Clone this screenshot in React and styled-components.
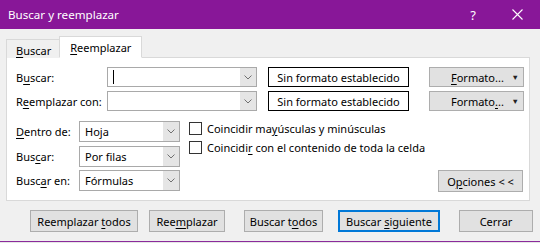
import React from "react";
import styled, { createGlobalStyle } from "styled-components";

const GlobalStyle = createGlobalStyle`
  html, body { margin: 0; padding: 0; }
  body {
    font-family: "Noto Sans", "Open Sans", sans-serif;
    font-size: 11px;
    color: #000;
    background: #f0f0f0;
  }
`;

const Window = styled.div`
  width: 540px;
  height: 243px;
  display: flex;
  flex-direction: column;
  background: #f0f0f0;
  overflow: hidden;
`;

const TitleBar = styled.div`
  height: 29px;
  flex-shrink: 0;
  background: #881798;
  color: #fff;
  display: flex;
  align-items: center;
  padding-left: 8px;
  font-size: 11.6px;
`;

const Title = styled.div`
  flex: 1;
`;

const TitleIcon = styled.div`
  width: 44px;
  display: flex;
  justify-content: center;
  align-items: center;
  font-size: 13px;
  margin-right: ${(p) => p.$mr || 0}px;
`;

const Content = styled.div`
  flex: 1;
  padding: 7px 10px 0 6px;
  display: flex;
  flex-direction: column;
`;

const Tabs = styled.div`
  display: flex;
  align-items: flex-end;
  height: 22px;
  position: relative;
  z-index: 1;
`;

const Tab = styled.div`
  height: ${(p) => (p.$active ? 22 : 19)}px;
  padding: 0 ${(p) => (p.$active ? 10 : 8)}px 0 ${(p) => (p.$active ? 10 : 9)}px;
  box-sizing: border-box;
  display: flex;
  align-items: center;
  background: ${(p) => (p.$active ? "#fff" : "#f0f0f0")};
  border: 1px solid #d9d9d9;
  border-bottom: ${(p) => (p.$active ? "1px solid #fff" : "none")};
  border-right: ${(p) => (p.$active ? "1px solid #d9d9d9" : "none")};
  padding-top: ${(p) => (p.$active ? 1 : 2)}px;
`;

const Panel = styled.div`
  height: 144px;
  box-sizing: border-box;
  margin-top: -1px;
  background: #fff;
  border: 1px solid #d9d9d9;
  padding: 9px 6px 8px 9px;
  display: flex;
  flex-direction: column;
`;

const TopGrid = styled.div`
  display: grid;
  grid-template-columns: 91px 150px 152px 115px;
  row-gap: 4px;
  & > :nth-child(4n + 3) { margin-left: 11px; }
  & > :nth-child(4n) { margin-left: 20px; }
`;

const Label = styled.div`
  display: flex;
  align-items: center;
  height: ${(p) => p.$h || 20}px;
  white-space: nowrap;
`;

const ComboBox = styled.div`
  height: ${(p) => p.$h || 20}px;
  width: ${(p) => p.$w || 150}px;
  box-sizing: border-box;
  border: 1px solid #a9a9a9;
  background: #fff;
  display: flex;
  align-items: stretch;
`;

const ComboText = styled.div`
  flex: 1;
  display: flex;
  align-items: center;
  padding-left: 5px;
  white-space: nowrap;
`;

const Caret = styled.span`
  display: inline-block;
  width: 1px;
  height: 14px;
  background: #000;
`;

const DropButton = styled.div`
  width: 16px;
  background: #e5e5e5;
  display: flex;
  align-items: center;
  justify-content: center;
`;

const FormatBox = styled.div`
  height: 20px;
  box-sizing: border-box;
  border: 1px solid #000;
  display: flex;
  align-items: center;
  justify-content: center;
  white-space: nowrap;
`;

const Button = styled.div`
  height: ${(p) => p.$h || 22}px;
  width: ${(p) => (p.$w ? `${p.$w}px` : "auto")};
  margin-left: ${(p) => p.$ml || 0}px;
  box-sizing: border-box;
  flex-shrink: 0;
  background: #e1e1e1;
  border: ${(p) => (p.$default ? "2px solid #0078d7" : "1px solid #adadad")};
  display: flex;
  align-items: center;
  justify-content: center;
  white-space: nowrap;
`;

const MenuButton = styled(Button)`
  justify-content: space-between;
  padding: 0 4px 0 21px;
`;

const Arrow = styled.span`
  font-size: 7.5px;
  color: #222;
`;

const Lower = styled.div`
  margin-top: 10px;
  display: flex;
  flex: 1;
`;

const Selects = styled.div`
  display: grid;
  grid-template-columns: 63px 101px;
  grid-auto-rows: 21px;
  row-gap: 3.5px;
`;

const Checks = styled.div`
  margin-left: 9px;
  display: flex;
  flex-direction: column;
  gap: 6px;
  padding-top: 1px;
`;

const CheckRow = styled.label`
  display: flex;
  align-items: center;
  height: 13px;
  white-space: nowrap;
`;

const CheckBox = styled.span`
  width: 13px;
  height: 13px;
  box-sizing: border-box;
  border: 1px solid #333;
  background: #fff;
  margin-right: 5px;
  flex-shrink: 0;
`;

const OptionsWrap = styled.div`
  flex: 1;
  display: flex;
  justify-content: flex-end;
  align-items: flex-end;
`;

const ButtonRow = styled.div`
  display: flex;
  margin-top: 9px;
  padding-left: 24px;
`;

const BottomEdge = styled.div`
  margin-top: auto;
  height: 1px;
  background: #8a2b9b;
  flex-shrink: 0;
`;

const SheetStrip = styled.div`
  height: 1px;
  flex-shrink: 0;
  background: #e6e6e6;
`;

const U = styled.u`
  text-decoration: underline;
  text-underline-offset: 2px;
`;

const Chevron = () => (
  <svg width="8" height="5" viewBox="0 0 8 5">
    <path d="M0.5 0.5 L4 4 L7.5 0.5" fill="none" stroke="#707070" strokeWidth="1" />
  </svg>
);

const Combo = ({ children, w, h, caret }) => (
  <ComboBox $w={w} $h={h}>
    <ComboText>{caret ? <Caret /> : <span>{children}</span>}</ComboText>
    <DropButton>
      <Chevron />
    </DropButton>
  </ComboBox>
);

const CloseIcon = () => (
  <svg width="11" height="11" viewBox="0 0 11 11">
    <path d="M0.5 0.5 L10.5 10.5 M10.5 0.5 L0.5 10.5" stroke="#fff" strokeWidth="1.1" />
  </svg>
);

export default function App() {
  return (
    <Window>
      <GlobalStyle />
      <TitleBar>
        <Title>Buscar y reemplazar</Title>
        <TitleIcon>?</TitleIcon>
        <TitleIcon $mr={1}>
          <CloseIcon />
        </TitleIcon>
      </TitleBar>
      <Content>
        <Tabs>
          <Tab>
            <span><U>B</U>uscar</span>
          </Tab>
          <Tab $active>
            <span><U>R</U>eemplazar</span>
          </Tab>
        </Tabs>
        <Panel>
          <TopGrid>
            <Label><span>B<U>u</U>scar:</span></Label>
            <Combo caret />
            <FormatBox>Sin formato establecido</FormatBox>
            <MenuButton $h={20}>
              <span><U>F</U>ormato...</span>
              <Arrow>▼</Arrow>
            </MenuButton>

            <Label><span>R<U>e</U>emplazar con:</span></Label>
            <Combo />
            <FormatBox>Sin formato establecido</FormatBox>
            <MenuButton $h={20}>
              <span>Formato<U>.</U>..</span>
              <Arrow>▼</Arrow>
            </MenuButton>
          </TopGrid>
          <Lower>
            <Selects>
              <Label $h={21}><span><U>D</U>entro de:</span></Label>
              <Combo w={101} h={21}>Hoja</Combo>
              <Label $h={21}><span>Bus<U>c</U>ar:</span></Label>
              <Combo w={101} h={21}>Por filas</Combo>
              <Label $h={21}><span>Busc<U>a</U>r en:</span></Label>
              <Combo w={101} h={21}>Fórmulas</Combo>
            </Selects>
            <Checks>
              <CheckRow>
                <CheckBox />
                <span>Coincidir ma<U>y</U>úsculas y minúsculas</span>
              </CheckRow>
              <CheckRow>
                <CheckBox />
                <span>Coincidi<U>r</U> con el contenido de toda la celda</span>
              </CheckRow>
            </Checks>
            <OptionsWrap>
              <Button $w={85}><span>O<U>p</U>ciones &lt; &lt;</span></Button>
            </OptionsWrap>
          </Lower>
        </Panel>
        <ButtonRow>
          <Button $w={108}><span>Reemplazar <U>t</U>odos</span></Button>
          <Button $w={76} $ml={11}><span>Ree<U>m</U>plazar</span></Button>
          <Button $w={79} $ml={19}><span>Buscar t<U>o</U>dos</span></Button>
          <Button $w={102} $ml={15} $default><span>Buscar <U>s</U>iguiente</span></Button>
          <Button $w={74} $ml={19}><span>Cerrar</span></Button>
        </ButtonRow>
      </Content>
      <BottomEdge />
      <SheetStrip />
    </Window>
  );
}
